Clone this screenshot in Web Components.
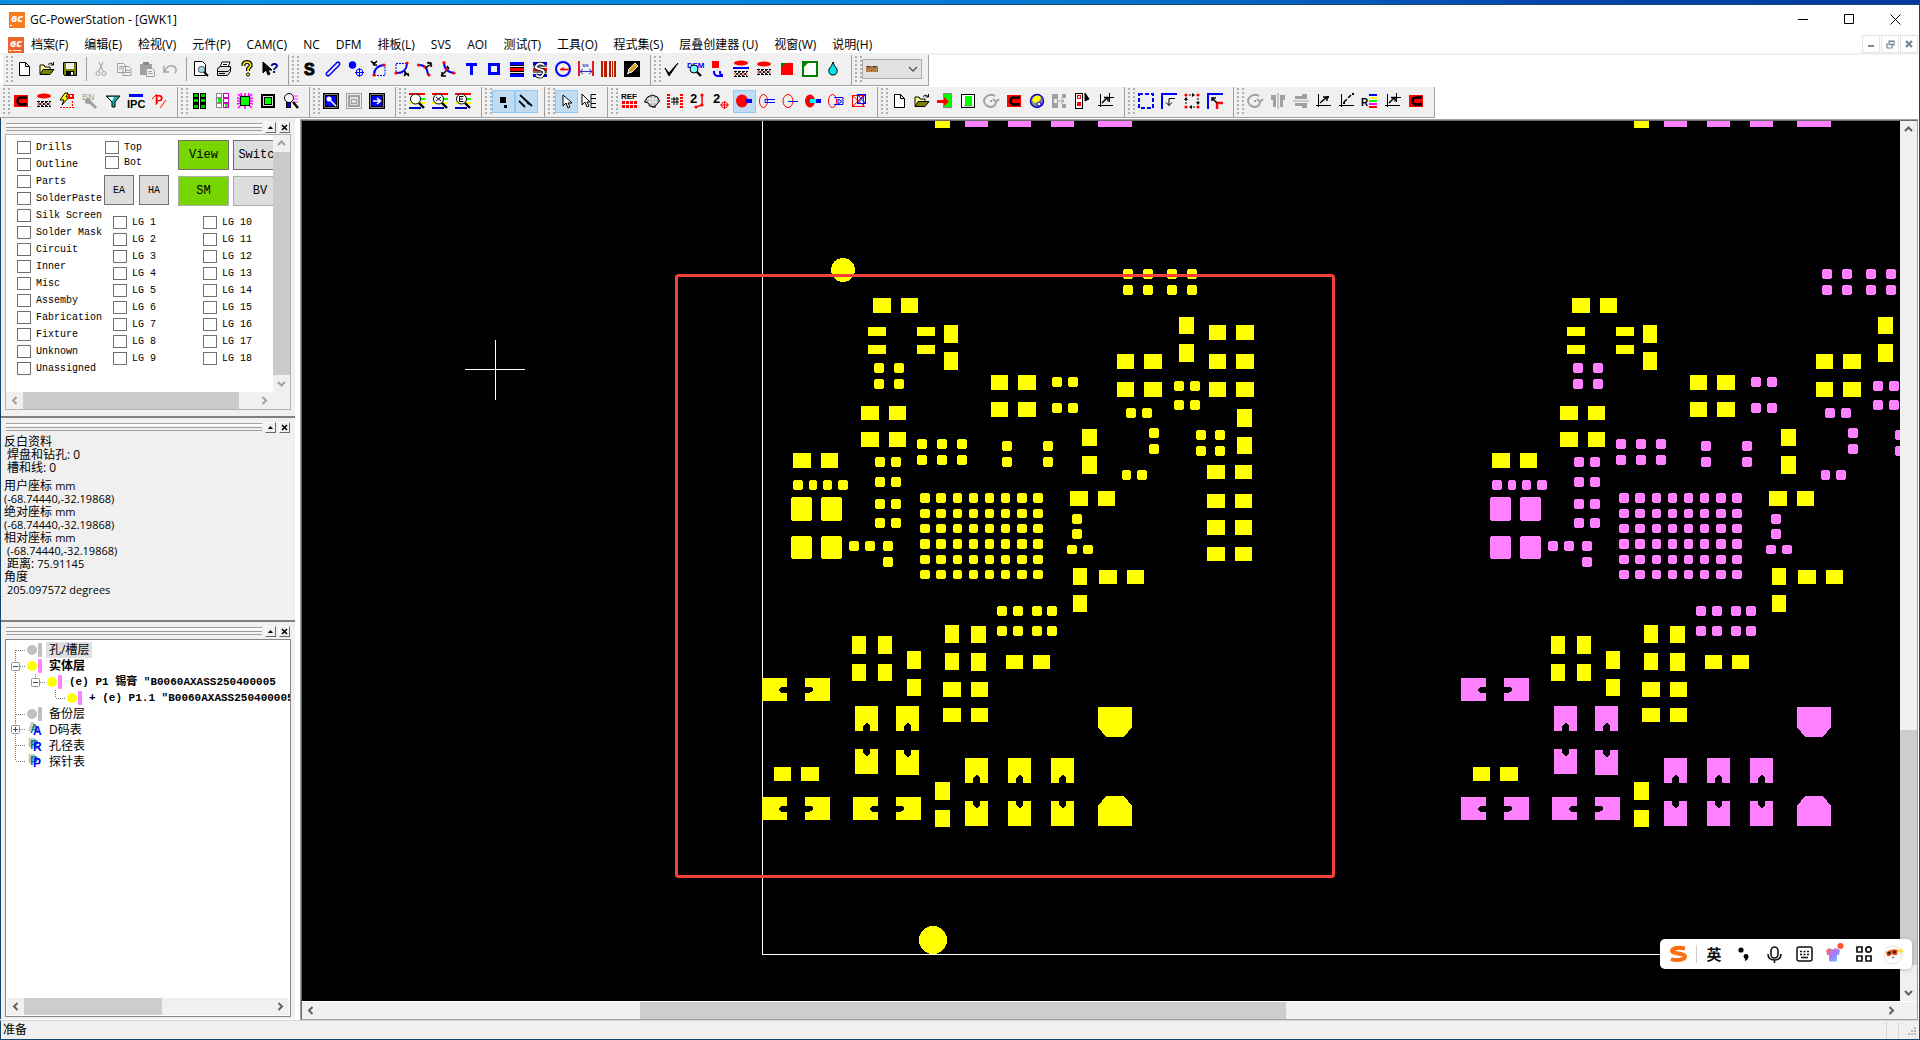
<!DOCTYPE html>
<html lang="zh-CN">
<head>
<meta charset="utf-8">
<title>GC-PowerStation - [GWK1]</title>
<style>
html,body{margin:0;height:100%}
body{font:12px/16px "Open Sans","Noto Sans CJK SC",sans-serif;color:#000;overflow:hidden}
</style>
</head>
<body>
<gc-app></gc-app>

<template id="t-app">
<style>
:host{display:flex;flex-direction:column;height:100vh;box-sizing:border-box;border:solid #17466b;border-width:0 1px 1px 0;background:#fff}
.desk{flex:none;height:4px;background:linear-gradient(90deg,#0a8fe0,#0091ea 20%,#0277d0 55%,#0446ae 80%,#033a9e);border-bottom:1px solid #17466b}
.bars{flex:none;border-top:2px solid #f0f0f0;display:flex;flex-direction:column;gap:1px}
.row{display:flex;height:31px}
.row.a{padding-left:3px}
.work{flex:1;display:flex;min-height:0;border-left:1px solid #17466b}
.dock{flex:none;width:294px;background:#f0f0f0;display:flex;flex-direction:column}
.view{flex:1;min-width:0;display:flex;flex-direction:column;margin:2px 2px 0 6px;border:solid #696969;border-width:1px 0 0 1px;outline:1px solid #a0a0a0;position:relative;background:#f0f0f0}
.mid{flex:1;display:flex;min-height:0}
.mid gc-board{flex:1}
.foot{display:flex;border-top:1px solid #fff}
.foot gc-scroll{flex:1}
.corner{width:17px}
select{appearance:none;width:60px;height:20px;align-self:center;border:1px solid #adadad;background:#e1e1e1;border-radius:0;font:10px "Liberation Mono",monospace;padding:0 3px;color:#000}
.combo{position:relative;display:flex}
.combo svg{position:absolute;right:4px;top:7px;pointer-events:none}
.checks{display:flex;height:100%}
.left{width:88px;display:flex;flex-direction:column;gap:4px;padding:6px 0 0 11px;box-sizing:border-box}
.right{flex:none;width:190px;display:flex;flex-direction:column}
.tools{display:flex;height:72px}
.tb{width:73px;padding:6px 0 0 11px;display:flex;flex-direction:column;gap:2px}
.hb{display:flex;gap:5px;margin:4px 0 0 -1px}
.grid{padding-top:5px;display:grid;grid-template-columns:51px 54px;gap:6px 4px;align-content:start}
button{font:12px "Liberation Mono",monospace;border:1px solid #707070;background:#ddd;padding:0;height:30px;border-radius:0;color:#000}
.hb button{width:30px;font-size:10px}
.grid .on{background:#77d500}
.grid .soft{border:1px solid #adadad}
.lg{display:grid;grid-auto-flow:column;grid-template-rows:repeat(9,13px);grid-template-columns:90px 90px;row-gap:4px;padding:9px 0 0 19px}
.tb,.grid{flex:none}
.p1{height:300px}.p2{height:204px}.p3{flex:1;min-height:0}
.box{display:flex;flex-direction:column;border:1px solid #b4b4b4;background:#fff;overflow:hidden;height:276px;box-sizing:border-box}
.box .in{display:flex;flex:1;min-height:0}
.box .c{flex:1;min-width:0;overflow:hidden}
.box .h{padding-right:17px;background:#f0f0f0;display:flex}
.box .h gc-scroll{flex:1}
.tree{height:100%;border-color:#828790}
.tree .c{padding-top:2px;line-height:16px}
.tree .h{padding:0;margin:1px}
.info{margin-left:-1px;line-height:13px}
.info p{margin:0 0 5px}
.n{font-size:11px}
.i{padding-left:3px}
gc-ime{position:absolute;right:5px;bottom:50px}
</style>
<div class="desk"></div>
<gc-title></gc-title>
<gc-menu></gc-menu>
<div class="bars">
 <div class="row a">
  <gc-band icons="new open save | cut copy paste undo | preview print help what"></gc-band>
  <gc-band icons="S tube dotplus arcA arcB arcC arcD T sq stack stackS clock dim bars pencil"></gc-band>
  <gc-band icons="check dfm curl lensA lensB redsq greensq drop"></gc-band>
  <gc-band><label class="combo"><select aria-label="单位"><option>mm</option></select><svg width="10" height="8"><path d="M1 1l4 4 4-4" fill="none" stroke="#555" stroke-width="1.3"/></svg></label></gc-band>
 </div>
 <div class="row">
  <gc-band icons="cred lensB bolt bn funnel ipc pred"></gc-band>
  <gc-band icons="gridA gridB chip gsq magchip"></gc-band>
  <gc-band icons="navA navB navC"></gc-band>
  <gc-band icons="magA magB magC"></gc-band>
  <gc-band icons="dots* lines*"></gc-band>
  <gc-band icons="cur* curE"></gc-band>
  <gc-band icons="ref globe hash twoA twoB pillA* pillB pillC pillD pillE pillF"></gc-band>
  <gc-band icons="new open exit gpage rot cred ball gtool list axisP"></gc-band>
  <gc-band icons="dash cornA four cornB"></gc-band>
  <gc-band icons="rot flipA flipB axisA axisB rain axisP cred"></gc-band>
 </div>
</div>
<div class="work">
 <div class="dock">
  <gc-pane class="p1">
   <div class="box"><div class="in"><div class="c"><div class="checks">
     <div class="left" id="left"></div>
     <div class="right">
      <div class="tools">
       <div class="tb"><gc-check label="Top"></gc-check><gc-check label="Bot"></gc-check>
        <div class="hb"><button>EA</button><button>HA</button></div></div>
       <div class="grid"><button class="on">View</button><button>Switch</button><button class="on soft">SM</button><button class="soft">BV</button></div>
      </div>
      <div class="lg" id="lg"></div>
     </div></div></div>
     <gc-scroll vertical pale sizes="0 217 0"></gc-scroll></div>
    <div class="h"><gc-scroll pale sizes="0 214 17"></gc-scroll></div>
   </div>
  </gc-pane>
  <gc-pane class="p2">
   <div class="info">
    <p>反白资料<br><span class="i">焊盘和钻孔: 0</span><br><span class="i">槽和线: 0</span></p>
    <div>用户座标 <span class="n">mm</span></div><div class="n">(-68.74440,-32.19868)</div>
    <div>绝对座标 <span class="n">mm</span></div><div class="n">(-68.74440,-32.19868)</div>
    <div>相对座标 <span class="n">mm</span></div><div class="n i">(-68.74440,-32.19868)</div>
    <div class="i">距离: <span class="n">75.91145</span></div><div>角度</div><div class="n i">205.097572 degrees</div>
   </div>
  </gc-pane>
  <gc-pane class="p3">
   <div class="box tree"><div class="c">
    <gc-node cells="first" icon="off" sel>孔/槽层</gc-node>
    <gc-node cells="minus" icon="on" bold>实体层</gc-node>
    <gc-node cells="v minusend" icon="on" mono>(e) P1 锡膏 "B0060AXASS250400005</gc-node>
    <gc-node cells="v blank last" icon="on" mono>+ (e) P1.1 "B0060AXASS250400005</gc-node>
    <gc-node cells="mid" icon="off">备份层</gc-node>
    <gc-node cells="plus" icon="A">D码表</gc-node>
    <gc-node cells="mid" icon="R">孔径表</gc-node>
    <gc-node cells="last" icon="P">探针表</gc-node>
   </div><div class="h"><gc-scroll sizes="0 139 110"></gc-scroll></div></div>
  </gc-pane>
 </div>
 <div class="view">
  <div class="mid"><gc-board></gc-board><gc-scroll vertical sizes="593 235 19"></gc-scroll></div>
  <div class="foot"><gc-scroll sizes="321 646 597"></gc-scroll><span class="corner"></span></div>
  <gc-ime></gc-ime>
 </div>
</div>
<gc-status>准备</gc-status>
</template>

<template id="t-title">
<style>
:host{flex:none;display:flex;align-items:center;height:29px;padding:0 16px 0 9px;background:#fff}
svg{display:block}
span{flex:1;padding-left:5px}
button{border:0;background:none;padding:0;width:46px;height:29px;display:grid;place-items:center}
.w{display:flex;margin-right:-15px}
</style>
<svg width="16" height="16"><rect width="16" height="16" fill="#f47b20"/><text x="2" y="10" font-family="Open Sans" font-style="italic" font-weight="800" font-size="9" fill="#fff">GC</text><path d="M1 13.5h2" stroke="#fff"/></svg>
<span>GC-PowerStation - [GWK1]</span>
<div class="w">
<button aria-label="最小化"><svg width="11" height="11"><path d="M0 5.500h10" stroke="#000"/></svg></button>
<button aria-label="最大化"><svg width="11" height="11"><path d="M.5.5h9v9h-9z" fill="none" stroke="#000"/></svg></button>
<button aria-label="关闭"><svg width="11" height="11"><path d="M.5.5l10 10m0-10l-10 10" stroke="#000"/></svg></button>
</div>
</template>

<template id="t-menu">
<style>
:host{flex:none;display:flex;align-items:end;height:19px;padding:0 1px 0 8px;background:#fff}
nav{flex:1;display:flex;padding-left:7px;gap:16px}
nav button{border:0;background:none;padding:0;font:inherit;color:#000;line-height:17px;white-space:nowrap}
.m{display:flex;gap:1px}
.m button{width:18px;height:18px;box-sizing:border-box;border:1px solid #e3e3e3;background:#fff;padding:0;display:grid;place-items:center}
svg{display:block}
</style>
<svg width="16" height="16"><rect width="16" height="16" fill="#f0642a"/><text x="2" y="10" font-family="Open Sans" font-style="italic" font-weight="800" font-size="9" fill="#fff">GC</text><path d="M1 13.500h13" stroke="#fff" stroke-dasharray="3 1 8"/></svg>
<nav></nav>
<div class="m">
<button aria-label="最小化窗口"><svg width="8" height="8"><rect x="1" y="5" width="6" height="2" fill="#75879b"/></svg></button>
<button aria-label="还原窗口"><svg width="9" height="9"><path d="M3 3V1h5v4H6M1 4h5v4H1zM1 4.500h5M3 1.500h5" fill="none" stroke="#75879b" stroke-width="1.200"/></svg></button>
<button aria-label="关闭窗口"><svg width="8" height="8"><path d="M1 1l6 6m0-6L1 7" stroke="#75879b" stroke-width="2.200"/></svg></button>
</div>
</template>

<template id="t-band">
<style>
:host{flex:none;display:flex;align-items:center;box-sizing:border-box;background:#f0f0f0;border-right:1px solid #a0a0a0;border-bottom:1px solid #a0a0a0;padding:0 6px 2px 0}
.g{width:7px;height:27px;margin:0 0 0 3px;background:radial-gradient(circle at 1px 1px,#b0b0b0 1px,transparent 1px) 0 0/5px 4px}
button{width:23px;height:23px;border:1px solid transparent;background:none;padding:0 0 0 2px;display:grid;place-items:center start;box-sizing:border-box}
button.on{background:#c0dcf3;border-color:#90c8f6}
.s{width:1px;height:24px;background:#a0a0a0;margin:0 3px 0 4px}
svg{display:block;overflow:visible}
</style>
<div class="g"></div><slot></slot>
</template>

<template id="t-scroll">
<style>
:host{display:flex;height:17px;background:#f0f0f0;--a:#606060;--t:#cdcdcd}
:host([pale]){--a:#a0a0a0;--t:#cacaca}
:host([vertical]){flex-direction:column;height:auto;width:17px}
button{flex:none;width:17px;height:17px;border:0;padding:0;background:none;display:grid;place-items:center}
path{fill:none;stroke:var(--a);stroke-width:2}
.th{background:var(--t)}
</style>
<button id="a" aria-label="向前"><svg width="9" height="9"><path/></svg></button>
<div></div><div class="th"></div><div></div>
<button id="b" aria-label="向后"><svg width="9" height="9"><path/></svg></button>
</template>

<template id="t-pane">
<style>
:host{display:flex;flex-direction:column;box-sizing:border-box;padding:2px 4px 0 4px;border-bottom:2px solid #808080}
:host(.p3){border:0;padding-bottom:2px}
.cap{flex:none;height:14px;display:flex;align-items:center;gap:3px;padding:0 1px 0 1px;margin-bottom:1px}
:host(.p1) .cap{margin-bottom:0}
.g{flex:1;height:8px;box-sizing:border-box;border:solid #a0a0a0;border-width:1px 0;background:linear-gradient(#fff 1px,#fff 2px,#f0f0f0 2px,#f0f0f0 3px,#a0a0a0 3px,#a0a0a0 4px,#f0f0f0 4px)}
button{width:11px;height:11px;padding:0;border:1px solid;border-color:#fff #696969 #696969 #fff;background:#f0f0f0;display:grid;place-items:center}
.body{flex:1;min-height:0}
</style>
<div class="cap"><div class="g"></div><button aria-label="收起"><svg width="7" height="5"><path d="M1 4l2.500-3L6 4z"/></svg></button><button aria-label="关闭面板"><svg width="7" height="7"><path d="M1 1l5 5m0-5L1 6" stroke="#000" stroke-width="1.500"/></svg></button></div>
<div class="body"><slot></slot></div>
</template>

<template id="t-check">
<style>
:host{display:block;height:13px}
label{display:flex;align-items:center;gap:5px;height:13px;font:10px "Liberation Mono",monospace;white-space:nowrap}
input{appearance:none;flex:none;margin:0;width:14px;height:13px;border:1px solid #707070;background:#fff}
</style>
<label><input type="checkbox"><span></span></label>
</template>

<template id="t-node">
<style>
:host{display:flex;height:16px;align-items:center;white-space:nowrap}
svg{flex:none;display:block}
span{margin-left:3px;padding:0 3px;line-height:16px}
b{width:10px;padding-left:7px;font:700 12px/16px "Liberation Sans",sans-serif;color:#00f;text-shadow:-3px -2px #008080,-5px -4px #c0c0c0;padding-top:2px}
:host([sel]) span{background:#e0e0e0}
:host([bold]) span,:host([mono]) span{font-weight:700}
:host([mono]) span{font-family:"Liberation Mono","Noto Sans CJK SC",monospace;font-size:11px}
</style>
<div id="c" style="display:flex"></div><span><slot></slot></span>
</template>

<template id="t-board">
<style>
:host{display:block;background:#000;overflow:hidden;min-width:0}
svg{display:block;width:100%;height:100%}
</style>
<svg shape-rendering="crispEdges"></svg>
</template>

<template id="t-ime">
<style>
:host{display:flex;align-items:center;box-sizing:border-box;width:252px;height:30px;background:#fff;border-radius:5px;padding-left:3px;box-shadow:0 1px 4px #0003}
button{flex:none;border:0;background:none;padding:0;width:30px;height:22px;display:grid;place-items:center;font:700 15px/22px "Noto Sans CJK SC",sans-serif;color:#111}
i{width:1px;height:18px;background:#ccc;margin:0 2px 0 3px}
svg{display:block;overflow:visible}
</style>
<button aria-label="输入法"><svg width="19" height="16" fill="none"><path d="M16 2.500C10 1 3 2 3 5s13 2 13 5.500C16 14 7 15 2 13" stroke="#ff6f0f" stroke-width="4"/></svg></button>
<i></i><button>英</button>
<button aria-label="标点"><svg width="12" height="14"><circle cx="3" cy="3" r="2.600"/><circle cx="8" cy="9.500" r="2.400"/><path d="M10.400 9q0 4-3.500 5v-1.500q1.500-.5 1.500-2"/></svg></button>
<button aria-label="语音"><svg width="15" height="17" fill="none" stroke="#111" stroke-width="1.600"><rect x="4" y="1" width="7" height="11" rx="3.500"/><path d="M1 8q0 6 6.500 6T14 8M7.500 14v3"/></svg></button>
<button aria-label="键盘"><svg width="17" height="16" fill="none" stroke="#111" stroke-width="1.500"><rect x="1" y="1" width="15" height="14" rx="2"/><path d="M4 5.500h9M4 8.500h9" stroke-dasharray="2 1.500"/><path d="M5 11.500h7"/></svg></button>
<button aria-label="皮肤"><svg width="18" height="18"><defs><linearGradient id="k" x2="1" y2="1"><stop stop-color="#ff6a4d"/><stop offset=".5" stop-color="#a77bff"/><stop offset="1" stop-color="#5fd4ff"/></linearGradient></defs><path d="M1 5l4-2q2.500 3 5 0l5 2-1 5h-2v6q-4 1-8 0v-6H2z" fill="url(#k)"/><circle cx="15.500" cy="1" r="3" fill="#ff4f30"/></svg></button>
<button aria-label="工具箱"><svg width="16" height="16" fill="none" stroke="#111" stroke-width="1.700"><path d="M1 1h5v5H1zM1 10h5v5H1zM10 10h5v5h-5z"/><circle cx="12.500" cy="3.500" r="2.700"/></svg></button>
<button aria-label="助手"><svg width="20" height="20"><circle cx="9" cy="11" r="9" fill="#fff" stroke="#f5dcd8"/><path d="M2 8q7-4 12-2l-1 5q-3 1-5-1-2 3-5 2z" fill="#e85318"/><circle cx="5" cy="9" r="1.500" fill="#222"/><circle cx="10.500" cy="8" r="1.500" fill="#222"/><path d="M8 14l2-1" stroke="#222"/><path d="M17 3l1 3 3 1-3 1-1 3-1-3-3-1 3-1z" fill="#ffdc2e"/></svg></button>
</template>

<template id="t-status">
<style>
:host{flex:none;display:flex;height:18px;border-top:1px solid #d7d7d7;background:#f0f0f0;padding-left:2px;line-height:18px;margin-top:1px;border-left:1px solid #17466b}
.t{flex:1}
.b{width:11px;border-left:1px solid #d7d7d7;margin-top:1px}
.e{width:20px;display:flex;align-items:end}
</style>
<div class="t"><slot></slot></div><div class="b"></div><div class="b e"><svg width="20" height="12" fill="#b8b8b8"><path d="M15 0h2v2h-2zM12 3h2v2h-2zM15 3h2v2h-2zM9 6h2v2H9zM12 6h2v2h-2zM15 6h2v2h-2z"/></svg></div>
</template>

<script>
const mount = (el, id) => {
  const root = el.attachShadow({mode: 'open'});
  root.append(document.getElementById(id).content.cloneNode(true));
  return root;
};

// Icon drawing helpers: every toolbar icon lives in a 16x16 box.
const r = (x, y, w, h, f) => `<rect x="${x}" y="${y}" width="${w}" height="${h}" fill="${f}"/>`;
const o = (x, y, w, h, s, f = 'none', sw = 1) => `<rect x="${x + sw / 2}" y="${y + sw / 2}" width="${w - sw}" height="${h - sw}" fill="${f}" stroke="${s}" stroke-width="${sw}"/>`;
const p = (d, s = '#000', f = 'none', sw = 1, x = '') => `<path d="${d}" stroke="${s}" fill="${f}" stroke-width="${sw}" ${x}/>`;
const c = (x, y, R, f = 'none', s = 'none', sw = 1) => `<circle cx="${x}" cy="${y}" r="${R}" fill="${f}" stroke="${s}" stroke-width="${sw}"/>`;
const e = (x, y, a, b, f = 'none', s = 'none') => `<ellipse cx="${x}" cy="${y}" rx="${a}" ry="${b}" fill="${f}" stroke="${s}"/>`;
const t = (x, y, z, f, s, w = 700) => `<text x="${x}" y="${y}" font-family="Liberation Sans" font-weight="${w}" font-size="${z}" fill="${f}">${s}</text>`;
const B = '#0000ff', R = '#ff0000', G = '#00ff00', D = '#a0a0a0', Y = '#ffff00';
const dot = (...a) => a.map(([x, y]) => c(x, y, 1.6, R)).join('');
const lens = y => e(8, y, 7, 2.4, R);
const weave = y => p(`M1 ${y + .5}h14M1 ${y + 5.5}h14`, '#000', 'none', 1, 'stroke-dasharray="3 1"') + p(`M2 ${y + 1}l4 4 4-4 4 4M2 ${y + 5}l4-4 4 4 4-4`, '#000', 'none', .8) + p(`M1 ${y + 3}h14`, R, 'none', 1.2, 'stroke-dasharray="1.500 2.500"');
const mag = (inner) => r(0, 0, 16, 2, R) + r(10, 5, 6, 2, G) + r(0, 9, 16, 2, Y) + r(0, 14, 12, 2, '#0000c0') + c(6.5, 6, 5, '#fff', '#000') + p('M10 10l5 5', '#000', 'none', 2.4) + inner;
const axis = x => p('M2.500 1v13M0 12.500h15') + x;
const ICONS = {
  new: p('M3.500 1.500h6l4 4v9h-10zM9.500 1.500v4h4', '#000', '#fff'),
  open: p('M1 13V4h4l1 2h5v2', '#000', '#ffff99') + p('M1 13.500l3-5h11l-4 5z', '#000', '#808000') + p('M9 3.500q3-3 5 0M14.500 1v3h-3'),
  save: p('M1.500 1.500h13v13h-12l-1-1z', '#000', '#808000') + r(4, 2, 8, 6, '#f0f0f0') + r(4, 10, 8, 4, '#000') + r(9, 11, 2, 3, '#fff'),
  cut: p('M6 1l4 9M10 1L6 10', D) + c(5, 12.5, 2, 'none', D) + c(11, 12.5, 2, 'none', D),
  copy: p('M1.500 2.500h6l2 2v7h-8zM7 5.500h6l2 2v7H7zM3 5.500h4M3 7.500h3M9 9.500h5M9 11.500h5', D),
  paste: r(1, 3, 12, 11, D) + r(4, 1, 6, 3, '#888') + p('M7.500 7.500h6l2 2v6h-8zM9 10.500h4M9 12.500h5', D, '#f0f0f0'),
  undo: p('M2 5v6h5M3 10q2-6 8-5 5 2 2 7', D, 'none', 1.4),
  preview: p('M1.500.5h8l3 3v11h-11z', '#000', '#fff') + c(8.500, 8.500, 3.200, '#9adbe8', '#555') + p('M11 11l4 4', '#000', 'none', 2),
  print: p('M4 6l2-5h8l-2 5z', '#000', '#fff') + p('M1.500 7.500l3-2h10v5l-3 4h-10z', '#000', '#ddd') + p('M1 10.500h11l3-3M3 12.500h6M7 3.500h4'),
  help: p('M4.500 5V3q1-2 3.500-2t3.500 2v2L9 8v2', '#000', 'none', 4) + p('M4.500 5V3q1-2 3.500-2t3.500 2v2L9 8v2', Y, 'none', 1.6) + c(9, 13.500, 1.600, Y, '#000'),
  what: p('M1 1v11l3-3 2 5 2-1-2-4h4z', '#000', '#000') + t(8, 12, 14, '#000080', '?'),
  S: `<text x="2" y="14" font-family="Liberation Sans" font-weight="700" font-size="16" stroke="#000">S</text>`,
  tube: p('M3 13L13 3', B, 'none', 5, 'stroke-linecap="round"') + p('M3 13L13 3', '#f0f0f0', 'none', 2, 'stroke-linecap="round"'),
  dotplus: c(4.500, 4, 3.700, B) + c(11.500, 11.500, 3.400, 'none', B) + p('M7 11.500h9M11.500 7v9', B),
  arcA: p('M3 14.500h11V4', B, 'none', 1, 'stroke-dasharray="2 1"') + p('M3 14Q3 5 13 4', B, 'none', 2) + dot([3, 14], [13, 4]) + p('M0 0l3 3M6 0L2 4M3 1v3h3', '#000', 'none', 1.500),
  arcB: p('M2 3v9h7M2 2.500h10', B, 'none', 1, 'stroke-dasharray="2 1"') + p('M3 12Q12 12 13 3', B, 'none', 2) + dot([2, 12], [13, 2]) + p('M10 15l3-3M15 15l-5-5M11 10v3h4', '#000', 'none', 1.500),
  arcC: p('M1 4q9-1 10 10', B, 'none', 2) + dot([1.500, 4], [8, 6], [12, 14]) + p('M9 7l5-5M10 2h4v4M11 1l4 4', '#000', 'none', 1.500),
  arcD: p('M4 1q0 10 10 11', B, 'none', 2) + dot([4, 1.500], [7, 8], [14, 12]) + p('M1 15l5-5M2 11v4h4M7 5l2 3', '#000', 'none', 1.500),
  T: r(3, 2, 11, 3, B) + r(7, 2, 3, 12, B),
  sq: o(2, 2, 12, 12, B, '#f0f0f0', 3),
  stack: r(1, 1, 14, 3, B) + r(1, 7, 14, 3, R) + r(1, 13, 14, 3, B) + r(1, 4, 14, 1, '#000') + r(1, 6, 14, 1, '#000') + r(1, 10, 14, 1, '#000') + r(1, 12, 14, 1, '#000'),
  stackS: r(1, 1, 14, 3, B) + r(1, 7, 14, 3, R) + r(1, 13, 14, 3, B) + p('M1 5h14M1 11h14') + p('M12 4Q8 1 5 4t2 4 5 3-2 4-6-1', '#000', 'none', 3.500) + p('M12 4Q8 1 5 4t2 4 5 3-2 4-6-1', '#fff', 'none', 2),
  clock: c(8, 8, 7, 'none', B, 2) + p('M5 8.500h9', R, 'none', 1.500) + c(8, 8, 1.600, R),
  dim: r(0, 0, 2, 15, '#e02020') + r(14, 0, 2, 15, '#e02020') + p('M2 10.500h12M5 8l-3 2.500L5 13M11 8l3 2.500-3 2.500', '#3030c0') + t(4, 6, 6, '#3030c0', 'ss'),
  bars: [0, 4, 8, 13].map(x => r(x, 0, 2, 16, '#b81c00')).join('') + r(3, 0, 1, 16, '#b81c00') + r(11, 0, 1, 16, '#b81c00'),
  pencil: r(0, 0, 16, 16, '#000') + p('M4 12l1-4 6-6 3 3-6 6z', '#fff', '#d8a020') + p('M3 13l2-1', '#fff'),
  check: p('M1 7l4 5L14 2 5 15 1 7z', '#000', '#000'),
  dfm: t(0, 7, 8, B, 'DFM') + c(7, 8, 4, '#7ff', '#000') + p('M10 11l4 4', '#000', 'none', 2.400),
  curl: r(2, 0, 7, 7, R) + p('M4 10v2q1 3 4 3h5M10 10v2q0 2 3 2', B, 'none', 2),
  lensA: lens(2) + r(0, 6, 16, 2, B) + weave(10),
  lensB: lens(3) + weave(8),
  redsq: r(2, 2, 12, 12, R) + p('M2 2h5l-5 5z', 'none', '#008000'),
  greensq: o(0, 0, 16, 16, '#008000', '#fff', 2) + p('M1 1h6l-6 6z', 'none', '#008000'),
  drop: p('M8 1q1 4 4 7 1 6-4 6t-4-6q3-3 4-7z', '#000', '#00e5ee'),
  cred: r(1, 2, 14, 12, R) + p('M12.500 6V4.500H10Q4.500 4 4.500 8t5.500 3.500h2.500V10', '#000', 'none', 2.400),
  bolt: p('M6 0L1 7h4l-2 5 7-8H7l2-4z', '#000', Y) + r(9, 1, 6, 5, R) + r(11, 2, 2, 2, '#fff') + p('M1 14.500h14M13.500 8v6', R, 'none', 1, 'stroke-dasharray="2 1"'),
  bn: t(0, 7, 9, D, 'BN', 400) + c(6, 8, 3, D) + p('M8 9l6 6', D, 'none', 3),
  funnel: p('M1 3h14l-5 6v5H7V9z', '#000', '#2aa') + p('M3 4h6l-2 4z', 'none', '#fff'),
  ipc: r(1, 1, 14, 3, B) + t(-1, 15, 11, '#000', 'IPC'),
  pred: p('M1 6L6 1M9 15l6-8M5 12l2-5', R) + t(4, 11, 12, R, 'P'),
  gridA: r(2, 0, 6, 16, '#000') + r(9, 0, 6, 16, '#000') + [1, 6, 12].map(y => r(3, y, 4, 3, '#00c000') + r(10, y, 4, 3, '#00c000')).join('') + p('M3 7.500h4M10 7.500h4', G),
  gridB: [0, 5, 10].map(y => o(9, y, 6, 5, '#c0c', '#fff') + o(2, y, 6, 5, '#888', '#fff')).join('') + r(4, 6, 3, 3, G) + r(11, 11, 3, 3, G),
  chip: p('M1 1l4 4M8 0v4M15 1l-4 4M0 8h4M12 8h4M1 15l4-4M8 12v4M15 15l-4-4M4 0l1 4M12 0l-1 4M0 5l4 1M0 11l4-1M16 5l-4 1M16 11l-4-1', '#f0f', 'none', 1.600) + o(3, 3, 10, 10, '#000', G),
  gsq: o(1, 1, 14, 14, '#000', '#ddd', 2) + o(4, 4, 8, 8, '#000', G),
  magchip: r(11, 1, 4, 14, '#fff') + p('M11 3h4M11 6h4M11 9h4', '#f0f') + c(6, 5, 4.500, '#fff', '#000') + o(3, 9, 5, 6, '#000', B) + p('M10 9l5 6', '#000', 'none', 2.400),
  navA: o(0, 0, 16, 16, '#000', '#fff', 1.5) + o(2, 2, 12, 12, '#000', B) + c(6, 6, 2.500, '#fff') + p('M7 7l6 6', '#fff', 'none', 1.500),
  navB: o(0, 0, 16, 16, D, '#eee') + o(2, 2, 12, 12, D, '#ddd', 2) + o(5, 6, 6, 5, D),
  navC: o(0, 0, 16, 16, '#000', '#fff', 1.5) + o(2, 2, 12, 12, '#000', B) + p('M4 8h7M8 5l3.500 3L8 11', '#fff', 'none', 1.600),
  magA: mag(''), magB: mag(p('M4 4l5 4M9 4L4 8')), magC: mag(p('M8.500 3.500h-4v5h4M4 6h4')),
  dots: r(5, 4, 6, 6, '#000') + r(9, 12, 3, 3, '#000'),
  lines: p('M2 2l12 11M1 8l6 6M9 9l2 2', '#000', 'none', 1.800),
  cur: p('M5 2v11l3-3 2 5 2-1-2-4h4z', '#000', '#fff'),
  curE: p('M1 1v11l3-3 2 5 2-1-2-4h3z', '#000', '#fff') + p('M15 1.500h-5v13h5M10 5.500h5M10 10.500h5'),
  ref: t(0, 6, 8, '#000', 'REF') + [1, 5, 9, 13].map(x => r(x, 8, 3, 3, R) + r(x, 12, 3, 3, R)).join(''),
  globe: p('M.5 9l3-5 5-2 5 2 2 4-5 6-5-1-1-3z', '#000', '#aaa') + p('M3 6h10M4 9h9M6 4v7M9 3v10M12 5v6', '#fff') + p('M8 14h4', '#000'),
  hash: p('M1.500 1v14M14.500 1v14', R, 'none', 3, 'stroke-dasharray="2 1"') + p('M4 6h8M4 9h8M7 4v8M10 4v8'),
  twoA: t(0, 10, 13, '#000', '2') + p('M12 2v10l-6 2', R, 'none', 1.500) + dot([12, 2], [6, 14], [12, 12]),
  twoB: t(0, 10, 13, '#000', '2') + c(11.500, 12, 3, 'none', R) + p('M7 12h9M11.500 8v8', R),
  pillA: e(6, 8, 6, 6.500, R) + r(10, 6, 6, 4, B),
  pillB: e(4.500, 8, 4, 6.500, 'none', R) + p('M16 6.500H6v3h10', B),
  pillC: e(6, 8, 5, 6.500, 'none', R) + p('M6 8.500h10', B),
  pillD: e(5, 8, 5, 6.500, R) + r(5, 6, 6, 4, '#0ff') + r(11, 6, 5, 4, B),
  pillE: e(4.500, 8, 4, 6.500, 'none', R) + p('M6 4.500h9v7H6M10 6l4 2.500-4 2.500z', B),
  pillF: o(1, 2, 12, 12, R) + p('M1 2l13 12M14 1L1 14', R) + o(6, 1, 9, 10, B) + p('M6 1l9 10M15 1l-9 10', B),
  exit: r(6, 0, 9, 15, G) + o(6, 0, 9, 15, '#888') + p('M0 7h7V4l5 4.500L7 13v-3H0z', 'none', R),
  gpage: o(1, 1, 14, 14, '#000', '#fff') + r(5, 3, 7, 10, G) + p('M4 13h9', '#888'),
  rot: p('M12 3Q7 0 3 4t0 8q5 4 9 0l1-3M10 6l3 3 3-3', D, 'none', 1.800) + r(7, 7, 2, 2, D),
  ball: c(8, 8, 6.500, '#888', '#00c', 1.400) + p('M3 7q4-7 9-3l-2 5-5 1z', 'none', Y) + c(10, 11, 2, '#fff', '#00c'),
  gtool: r(0, 1, 6, 14, D) + r(2, 6, 3, 4, '#eee') + r(10, 1, 4, 4, D) + r(10, 11, 4, 4, D) + p('M6 8h6M9 5l3 3-3 3', D),
  list: o(0, 0, 8, 16, '#000', '#fff') + o(2, 2, 4, 4, R) + r(2, 9, 4, 4, R) + p('M10 0v8l4-2z', '#000', '#000'),
  axisA: axis(p('M4 10l7-6M7 4h4v4', '#000', 'none', 1.500) + r(11, 3, 2, 2, '#000')),
  axisB: axis(p('M5 9l7-7', '#000', 'none', 1.500, 'stroke-dasharray="4 2"') + r(13, 0, 2, 2, '#000') + r(4, 9, 2, 2, '#000')),
  axisP: axis(p('M4 10l5-5M6 4.500h4v4', '#000', 'none', 1.500) + p('M11.500 0v9M8 4.500h8')),
  dash: p('M1 1h14v14H1z', B, 'none', 2, 'stroke-dasharray="4 2"'),
  cornA: p('M16 1H1v15', B, 'none', 2) + p('M14 5.500H8v7M5 9.500l3 3 3-3'),
  four: dot([2, 2], [14, 2], [2, 14], [14, 14]) + p('M5 2h6M14 5v6M11 14H5M2 11V5', '#000', 'none', 1, 'stroke-dasharray="2 1"') + p('M8 0l3 2-3 2zM12 9l2 3 2-3zM8 12l-3 2 3 2zM0 7l2-3 2 3z', 'none', '#000'),
  cornB: p('M16 1H1v15', B, 'none', 2) + p('M16 10h-6v6', R, 'none', 2.400) + p('M5 8V5h4M5 5l5 5', '#000', 'none', 1.500),
  flipA: r(1, 2, 5, 5, D) + r(3, 5, 3, 9, D) + r(7.500, 0, 1, 16, D) + r(10, 2, 5, 5, D) + r(10, 5, 3, 9, D),
  flipB: r(9, 1, 5, 5, D) + r(2, 3, 9, 3, D) + r(0, 7.500, 16, 1, D) + r(9, 10, 5, 5, D) + r(2, 10, 9, 3, D),
  rain: t(-1, 13, 10, '#000', 'R') + r(7, 1, 8, 2, B) + r(7, 4, 8, 2, Y) + r(7, 7, 8, 2, G) + r(7, 10, 8, 2, '#f0f') + r(7, 13, 8, 2, R),
};

class GcApp extends HTMLElement {
  constructor() {
    super();
    const root = mount(this, 't-app');
    const check = l => `<gc-check label="${l}"></gc-check>`;
    root.getElementById('left').innerHTML = ['Drills', 'Outline', 'Parts', 'SolderPaste', 'Silk Screen', 'Solder Mask', 'Circuit', 'Inner', 'Misc', 'Assemby', 'Fabrication', 'Fixture', 'Unknown', 'Unassigned'].map(check).join('');
    root.getElementById('lg').innerHTML = Array.from({length: 18}, (_, i) => check('LG ' + (i + 1))).join('');
  }
}
class GcTitle extends HTMLElement { constructor() { super(); mount(this, 't-title'); } }
class GcMenu extends HTMLElement {
  constructor() {
    super();
    mount(this, 't-menu').querySelector('nav').innerHTML =
      ['档案(F)', '编辑(E)', '检视(V)', '元件(P)', 'CAM(C)', 'NC', 'DFM', '排板(L)', 'SVS', 'AOI', '测试(T)', '工具(O)', '程式集(S)', '层叠创建器 (U)', '视窗(W)', '说明(H)'].map(s => `<button>${s}</button>`).join('');
  }
}
class GcBand extends HTMLElement {
  constructor() { super(); mount(this, 't-band'); }
  connectedCallback() {
    for (const n of (this.getAttribute('icons') || '').split(' ').filter(Boolean)) {
      const on = n.endsWith('*'), k = n.replace('*', '');
      this.shadowRoot.querySelector('slot').insertAdjacentHTML('beforebegin', k === '|' ? '<div class="s"></div>' :
        `<button class="${on ? 'on' : ''}" aria-label="${k}"><svg width="16" height="16">${ICONS[k]}</svg></button>`);
    }
  }
}
class GcScroll extends HTMLElement {
  constructor() { super(); mount(this, 't-scroll'); }
  connectedCallback() {
    const v = this.hasAttribute('vertical'), q = this.shadowRoot, s = this.getAttribute('sizes').split(' ');
    q.querySelectorAll('div').forEach((d, i) => d.style.flex = s[i] + ' 0 0');
    const [a, b] = q.querySelectorAll('path');
    a.setAttribute('d', v ? 'M1 6l3.500-3.500L8 6' : 'M6.500 1L3 4.500 6.500 8');
    b.setAttribute('d', v ? 'M1 3l3.500 3.500L8 3' : 'M2.500 1L6 4.500 2.500 8');
  }
}
class GcPane extends HTMLElement { constructor() { super(); mount(this, 't-pane'); } }
class GcCheck extends HTMLElement {
  constructor() { super(); mount(this, 't-check'); }
  connectedCallback() { this.shadowRoot.querySelector('span').textContent = this.getAttribute('label'); }
}
class GcNode extends HTMLElement {
  constructor() { super(); mount(this, 't-node'); }
  connectedCallback() {
    const dash = d => `<path d="${d}" stroke="#808080" stroke-dasharray="1 1"/>`;
    const sign = s => `<rect x="5.500" y="4.500" width="8" height="8" rx="1" fill="#fff" stroke="#919191"/><path d="M7 8.500h5${s ? 'M9.500 6v5' : ''}" stroke="#2a4a90"/>`;
    const V = 'M9.500 0v16', H = 'M10 8.500h10';
    const cell = {
      first: dash('M9.500 8v8' + H), v: dash(V), mid: dash(V + H), blank: '', last: dash('M9.500 0v8' + H),
      minus: dash(V + H) + sign(0), plus: dash(V + H) + sign(1), minusend: dash('M9.500 0v8' + H) + sign(0),
    };
    const pic = k => {
      if (k !== 'on' && k !== 'off') return `<b>${k}</b>`;
      const g = k === 'off';
      return `<svg width="17" height="16">${c(6, 8, 5, g ? '#c0c0c0' : Y)}<rect x="12" y="1" width="4" height="14" rx="1" fill="${g ? '#c0c0c0' : '#ff80ff'}"/></svg>`;
    };
    this.shadowRoot.getElementById('c').innerHTML =
      this.getAttribute('cells').split(' ').map(k => `<svg width="20" height="16">${cell[k]}</svg>`).join('') + pic(this.getAttribute('icon'));
  }
}
class GcBoard extends HTMLElement {
  constructor() {
    super();
    // Pads in thirds of a pixel: x y w h, measured from the pattern's own origin.
    const rects = `396 174 54 45,480 174 51 45,381 261 54 27,528 261 54 27,381 315 54 27,528 315 54 27,609 255 42 54,609 336 42 54,
360 498 54 42,444 498 51 42,360 576 54 45,444 576 51 45,156 639 54 45,240 639 51 45,750 405 51 45,831 405 54 45,750 486 51 45,831 486 54 45,
1128 342 51 45,1209 342 54 45,1128 426 51 45,1209 426 54 45,1314 231 45 51,1314 312 45 54,1023 567 45 51,1023 648 45 54,
987 753 54 45,1071 753 51 45,996 984 42 51,1074 990 54 42,1158 990 51 42,1404 255 51 45,1485 255 54 45,1404 342 51 45,1485 342 54 45,
1404 426 51 45,1485 426 54 45,1488 507 45 54,1488 591 45 51,1398 675 54 42,1482 675 51 42,1398 762 54 42,1482 762 51 42,1398 840 54 45,1482 840 51 45,1398 921 54 42,1482 921 51 42,
996 1065 42 51,612 1155 42 54,690 1158 45 51,612 1239 42 51,690 1239 45 54,606 1326 54 45,690 1326 51 45,606 1404 54 42,690 1404 51 42,
795 1245 51 42,876 1245 51 42,333 1188 42 54,411 1188 42 54,333 1272 42 51,411 1272 42 51,498 1233 42 54,498 1317 42 51,99 1581 51 42,180 1581 54 42,582 1626 45 54,582 1710 45 51,582 -357 45 21`;
    const small = `399 369,459 369,399 417,459 417,402 651,450 651,402 711,450 711,402 777,450 777,402 834,450 834,528 597,588 597,648 597,528 645,588 645,648 645,
783 603,906 603,783 651,906 651,933 411,981 411,933 489,981 489,1155 504,1203 504,1224 564,1224 612,1299 423,1347 423,1299 480,1347 480,1365 570,1422 570,1365 618,1422 618,
1143 690 27 30,1188 690,993 822,993 867,978 915 30 27,1026 915 30 27,1146 87,1206 87,1278 87,1338 87,1146 135,1206 135,1278 135,1338 135,156 720,204 720 24 30,246 720 27 30,291 720,
324 903,372 903,426 903,426 951,768 1098,816 1098,873 1098,918 1098,768 1158,816 1158,873 1158,918 1158,150 771 63 72,240 771 63 72,150 888 63 69,240 888 63 69`;
    const parse = s => s.split(',').map(a => a.trim().split(' ').map(n => Number(n) / 3));
    const sm = parse(small);
    for (const [y, h] of [[759, 30], [807, 27], [852, 27], [897, 30], [945, 27], [990, 27]])
      [537, 585, 636, 684, 732, 780, 828, 876].forEach((x, i) => sm.push([x / 3, y / 3, (i > 1 && i < 6 ? 9 : 10), h / 3]));
    const notch = [];
    for (const [x, y] of [[21, 438], [21, 557], [112, 557]]) notch.push(`M${x} ${y}h25v9h-5l-3 2v2l2 2h6v8h-25z`);
    for (const [x, y] of [[64, 438], [64, 557], [155, 557]]) notch.push(`M${x} ${y}h25v23h-25v-8h4l4-2v-2l-2-2h-6z`);
    for (const [x, y] of [[114, 466], [155, 466], [224, 518], [267, 518], [310, 518]]) notch.push(`M${x} ${y}h23v25h-8v-5l-3-3h-1l-3 3v5h-8z`);
    for (const [x, y] of [[114, 509], [155, 510], [224, 561], [267, 561], [310, 561]]) notch.push(`M${x} ${y}h8v4l3 3h1l3-3v-4h8v25h-23z`);
    notch.push('M357 467h34v20l-8 10h-18l-8-10z', 'M357 586v-20l8-10h18l8 10v20z');
    // Small pads have their corners nibbled off by one pixel.
    const pad = (x, y, w = 10, h = 10) => `M${x + 1} ${y}h${w - 2}v1h1v${h - 2}h-1v1h${2 - w}v-1h-1v${2 - h}h1z`;
    const unit = col =>
      parse(rects).map(([x, y, w, h]) => r(x, y, w, h, Y)).join('') +
      `<path d="${sm.map(a => pad(...a)).join('')}${notch.join('')}" fill="${col}"/>` +
      [[224, 23], [267, 23], [310, 23], [357, 34]].map(([x, w]) => r(x, -119, w, 6, '#ff80ff')).join('');
    mount(this, 't-board').querySelector('svg').innerHTML =
      `<g transform="translate(-302 -121)"><path d="M762.500 121V954.500H2600" fill="none" stroke="#fff"/>
<g transform="translate(741 240)">${unit(Y)}</g><g transform="translate(1440 240)">${unit('#ff80ff')}</g>
${c(843, 270, 12, Y)}${c(933, 940, 14, Y)}
<rect x="676.500" y="275.500" width="657" height="601" rx="2" fill="none" stroke="#f44336" stroke-width="3" shape-rendering="auto"/>
<path d="M465 369.500h60M495.500 340v60" stroke="#fff"/></g>`;
  }
}
class GcIme extends HTMLElement { constructor() { super(); mount(this, 't-ime'); } }
class GcStatus extends HTMLElement { constructor() { super(); mount(this, 't-status'); } }

Object.entries({'gc-title': GcTitle, 'gc-menu': GcMenu, 'gc-band': GcBand, 'gc-scroll': GcScroll, 'gc-pane': GcPane, 'gc-check': GcCheck,
  'gc-node': GcNode, 'gc-board': GcBoard, 'gc-ime': GcIme, 'gc-status': GcStatus, 'gc-app': GcApp}).forEach(([n, k]) => customElements.define(n, k));
</script>
</body>
</html>
